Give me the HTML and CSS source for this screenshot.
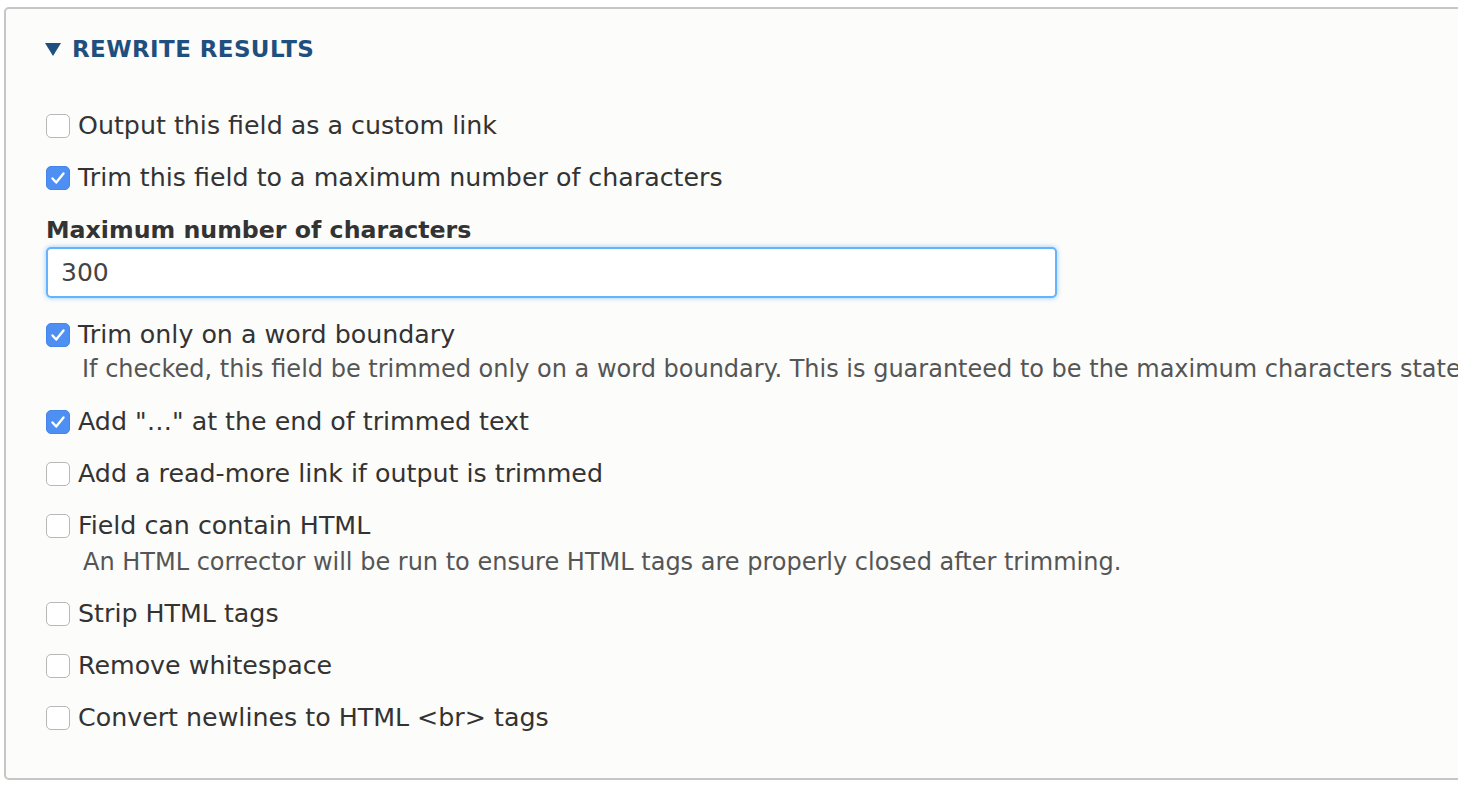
FILE: index.html
```
<!DOCTYPE html>
<html>
<head>
<meta charset="utf-8">
<link rel="stylesheet" href="styles.css">
</head>
<body>
<fieldset class="panel">
  <div class="legend"><svg class="arrow" width="16" height="13" viewBox="0 0 16 13"><path d="M0 0H16L8 13Z" fill="#1f4f7f"/></svg>REWRITE RESULTS</div>
  <div class="items">
    <div class="item"><label class="check"><span class="box"></span>Output this field as a custom link</label></div>
    <div class="item"><label class="check"><span class="box on"><svg viewBox="0 0 24 24" width="24" height="24"><path d="M6.5 12.5L10.2 16.5L17.5 7.5" fill="none" stroke="#fff" stroke-width="2.4" stroke-linecap="round" stroke-linejoin="round"/></svg></span>Trim this field to a maximum number of characters</label></div>
    <div class="field">
      <div class="flabel">Maximum number of characters</div>
      <div class="input">300</div>
    </div>
    <div class="item has-desc"><label class="check"><span class="box on"><svg viewBox="0 0 24 24" width="24" height="24"><path d="M6.5 12.5L10.2 16.5L17.5 7.5" fill="none" stroke="#fff" stroke-width="2.4" stroke-linecap="round" stroke-linejoin="round"/></svg></span>Trim only on a word boundary</label>
      <div class="desc">If checked, this field be trimmed only on a word boundary. This is guaranteed to be the maximum characters state</div></div>
    <div class="item"><label class="check"><span class="box on"><svg viewBox="0 0 24 24" width="24" height="24"><path d="M6.5 12.5L10.2 16.5L17.5 7.5" fill="none" stroke="#fff" stroke-width="2.4" stroke-linecap="round" stroke-linejoin="round"/></svg></span>Add "…" at the end of trimmed text</label></div>
    <div class="item"><label class="check"><span class="box"></span>Add a read-more link if output is trimmed</label></div>
    <div class="item has-desc2"><label class="check"><span class="box"></span>Field can contain HTML</label>
      <div class="desc desc2">An HTML corrector will be run to ensure HTML tags are properly closed after trimming.</div></div>
    <div class="item"><label class="check"><span class="box"></span>Strip HTML tags</label></div>
    <div class="item"><label class="check"><span class="box"></span>Remove whitespace</label></div>
    <div class="item"><label class="check"><span class="box"></span>Convert newlines to HTML &lt;br&gt; tags</label></div>
  </div>
</fieldset>
</body>
</html>
```
FILE: styles.css
```
html, body { margin: 0; padding: 0; background: #ffffff; overflow: hidden; }
body { width: 1458px; height: 790px; font-family: "DejaVu Sans", sans-serif; color: #333; }
.panel {
  box-sizing: border-box;
  margin: 7px 0 0 4px;
  width: 1500px;
  height: 773px;
  border: 2px solid #c6c6c6;
  border-radius: 5px;
  background: #fcfcfa;
  padding: 0;
  min-width: 0;
}
.legend {
  margin: 25px 0 0 39px;
  font-size: 23px;
  font-weight: bold;
  color: #1f4f7f;
  letter-spacing: 0.4px;
  line-height: 30px;
  display: flex;
  align-items: center;
}
.arrow { margin-right: 11px; flex: none; }
.items { margin: 47px 0 0 40px; display: flex; flex-direction: column; }
.item { margin-bottom: 22px; }
.item.has-desc { margin-bottom: 23px; }
.item.has-desc2 { margin-bottom: 22px; }
.check { display: flex; align-items: center; font-size: 25.3px; line-height: 30px; color: #333; white-space: nowrap; }
.box {
  width: 24px; height: 24px; box-sizing: border-box;
  border: 1px solid #b8b8b8; border-radius: 5px; background: #fff;
  margin-right: 8px; flex: none; position: relative;
}
.box.on { background: #4d8ff2; border-color: #4486ea; }
.box svg { position: absolute; left: -1px; top: -1px; }
.desc { font-size: 24px; line-height: 30px; color: #555; margin: 4px 0 0 36px; white-space: nowrap; }
.desc2 { margin-top: 6px; margin-left: 37px; }
.field { margin-bottom: 22px; }
.flabel { font-size: 23.7px; font-weight: bold; line-height: 30px; color: #333; margin-bottom: 2px; }
.input {
  box-sizing: border-box; width: 1011px; height: 51px;
  border: 2px solid #66b3fb; border-radius: 5px; background: #fff;
  box-shadow: 0 0 5px rgba(90, 170, 255, 0.65);
  font-size: 25px; line-height: 47px; padding-left: 13px; color: #444;
}
```
